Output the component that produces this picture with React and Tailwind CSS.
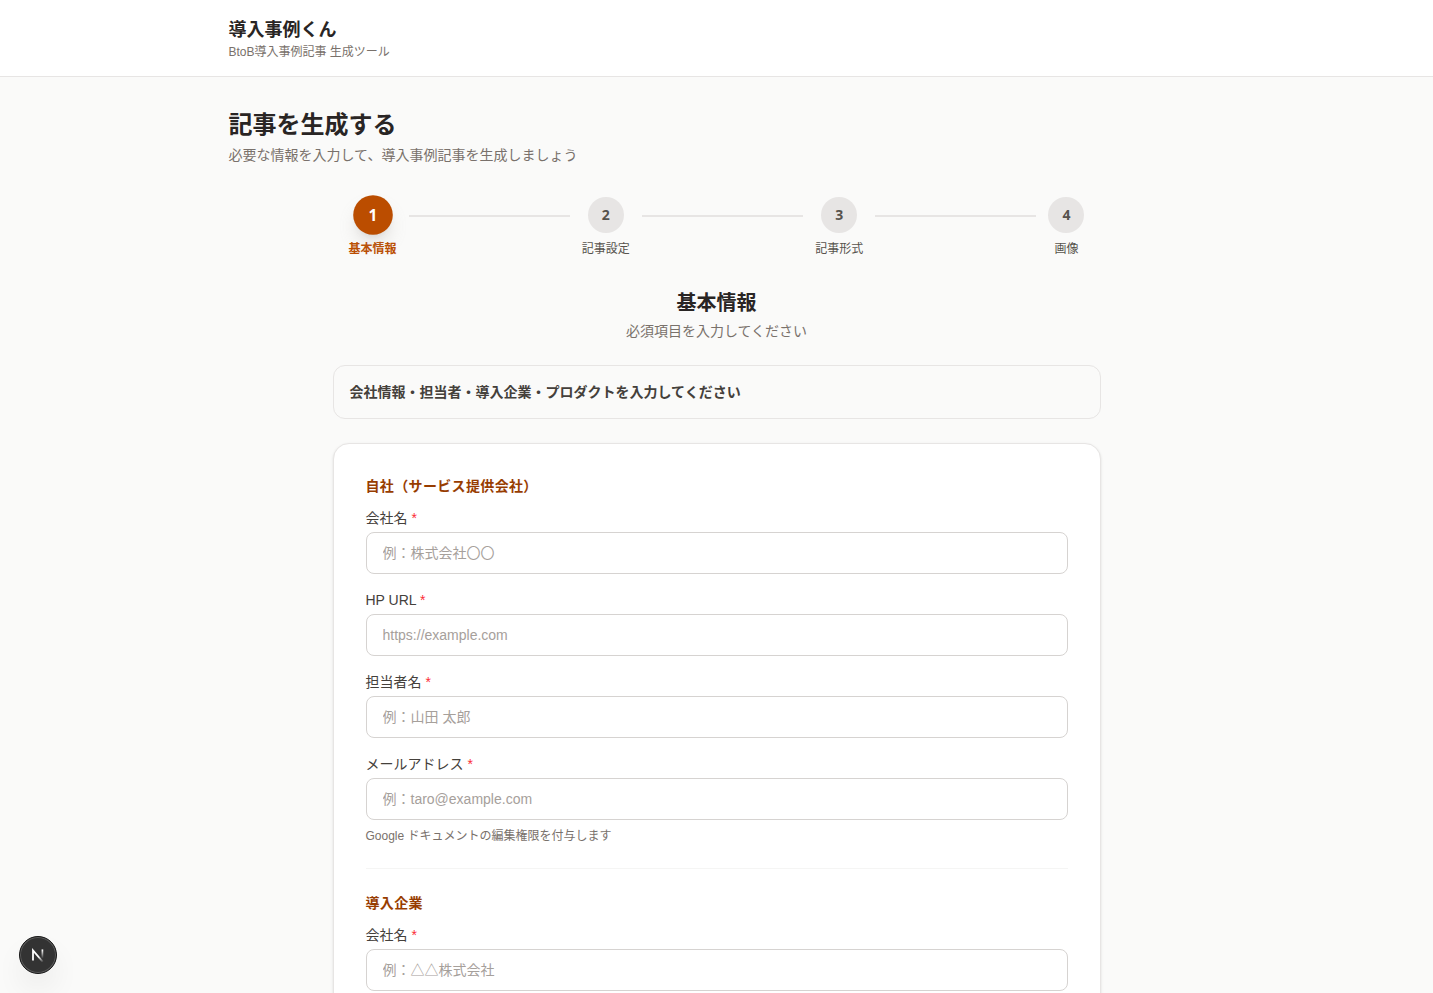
import React, {useState} from 'react';

const steps = ['基本情報', '記事設定', '記事形式', '画像'];

const sections = [
    {
        title: '自社（サービス提供会社）',
        fields: [
            {id: 'companyName', label: '会社名', placeholder: '例：株式会社〇〇'},
            {id: 'companyUrl', label: 'HP URL', type: 'url', placeholder: 'https://example.com'},
            {id: 'contactName', label: '担当者名', placeholder: '例：山田 太郎'},
            {
                id: 'contactEmail',
                label: 'メールアドレス',
                type: 'email',
                placeholder: '例：taro@example.com',
                hint: 'Google ドキュメントの編集権限を付与します',
            },
        ],
    },
    {
        title: '導入企業',
        fields: [
            {id: 'clientName', label: '会社名', placeholder: '例：△△株式会社'},
        ],
    },
];

const Stepper = ({current}) => (
    <ol className="flex items-start px-4 mb-8">
        {steps.map((name, i) => {
            const active = i === current;
            return (
                <React.Fragment key={name}>
                    {i > 0 && <li aria-hidden="true" className="flex-1 h-0.5 mx-3 mt-[18px] bg-stone-200" />}
                    <li className="flex flex-col items-center" aria-current={active ? 'step' : undefined}>
                        <div
                            className={
                                active
                                    ? 'w-9 h-9 rounded-full flex items-center justify-center text-sm font-bold font-["Noto_Sans"] bg-amber-700 text-white scale-110 shadow-lg shadow-stone-400/30'
                                    : 'w-9 h-9 rounded-full flex items-center justify-center text-sm font-bold font-["Noto_Sans"] bg-stone-200 text-stone-600'
                            }
                        >
                            {i + 1}
                        </div>
                        <span
                            className={
                                active
                                    ? 'mt-2 text-xs font-bold text-amber-700'
                                    : 'mt-2 text-xs text-stone-600'
                            }
                        >
                            {name}
                        </span>
                    </li>
                </React.Fragment>
            );
        })}
    </ol>
);

const Field = ({field, value, onChange}) => (
    <div>
        <label htmlFor={field.id} className="block mb-1 text-sm text-stone-700">
            {field.label} <span className="text-red-500">*</span>
        </label>
        <input
            id={field.id}
            type={field.type || 'text'}
            value={value}
            onChange={(e) => onChange(field.id, e.target.value)}
            placeholder={field.placeholder}
            className="block w-full px-4 py-2.5 text-sm text-stone-800 placeholder:text-stone-400 bg-white border border-stone-300 rounded-lg outline-none focus:ring-2 focus:ring-amber-600"
        />
        {field.hint && <p className="mt-2 text-xs text-stone-500">{field.hint}</p>}
    </div>
);

const DevBadge = () => (
    <button
        type="button"
        aria-label="Open Next.js Dev Tools"
        className="fixed left-[19px] bottom-[19px] w-[38px] h-[38px] rounded-full bg-[#333333] border border-[#171717] ring-1 ring-inset ring-[#5c5c5c] shadow-[0_16px_32px_-8px_rgba(0,0,0,0.16)] flex items-center justify-center"
    >
        <svg width="14" height="14" viewBox="0 0 14 14" fill="none">
            <defs>
                <linearGradient id="diag" x1="8" y1="8.5" x2="12.5" y2="14" gradientUnits="userSpaceOnUse">
                    <stop stopColor="#fff" />
                    <stop offset="1" stopColor="#fff" stopOpacity="0" />
                </linearGradient>
                <linearGradient id="stem" x1="11" y1="2" x2="11" y2="10.5" gradientUnits="userSpaceOnUse">
                    <stop stopColor="#fff" />
                    <stop offset="1" stopColor="#fff" stopOpacity="0" />
                </linearGradient>
            </defs>
            <path d="M2 12.6V2.4L11.8 13.8" stroke="url(#diag)" strokeWidth="1.8" />
            <path d="M11.4 1.4V10.5" stroke="url(#stem)" strokeWidth="1.7" />
        </svg>
    </button>
);

const App = () => {
    const [values, setValues] = useState({});

    const handleChange = (id, value) => {
        setValues((prev) => ({...prev, [id]: value}));
    };

    return (
        <div className="min-h-screen bg-stone-50 text-stone-800 font-['Liberation_Sans','Noto_Sans_CJK_JP',sans-serif]">
            <header className="bg-white border-b border-stone-200">
                <div className="max-w-5xl mx-auto px-6 py-4">
                    <p className="text-lg font-bold">導入事例くん</p>
                    <p className="text-xs text-stone-500">BtoB導入事例記事 生成ツール</p>
                </div>
            </header>

            <main className="max-w-5xl mx-auto px-6 py-8">
                <div className="mb-8">
                    <h1 className="text-2xl font-bold">記事を生成する</h1>
                    <p className="mt-1 text-sm text-stone-500">必要な情報を入力して、導入事例記事を生成しましょう</p>
                </div>

                <div className="max-w-3xl mx-auto">
                    <Stepper current={0} />

                    <div className="mb-6 text-center">
                        <h2 className="text-xl font-bold">基本情報</h2>
                        <p className="mt-1 text-sm text-stone-500">必須項目を入力してください</p>
                    </div>

                    <div className="mb-6 p-4 border border-stone-200 rounded-xl">
                        <p className="text-sm font-bold text-stone-700">会社情報・担当者・導入企業・プロダクトを入力してください</p>
                    </div>

                    <form className="p-8 bg-white border border-stone-200 rounded-2xl shadow-sm">
                        {sections.map((section, i) => (
                            <section key={section.title} className={i > 0 ? 'mt-6 pt-6 border-t border-stone-100' : ''}>
                                <h3 className="mb-3 text-sm font-bold tracking-wide text-amber-800">{section.title}</h3>
                                <div className="space-y-4">
                                    {section.fields.map((field) => (
                                        <Field
                                            key={field.id}
                                            field={field}
                                            value={values[field.id] || ''}
                                            onChange={handleChange}
                                        />
                                    ))}
                                </div>
                            </section>
                        ))}
                    </form>
                </div>
            </main>

            <DevBadge />
        </div>
    );
};

export default App;
